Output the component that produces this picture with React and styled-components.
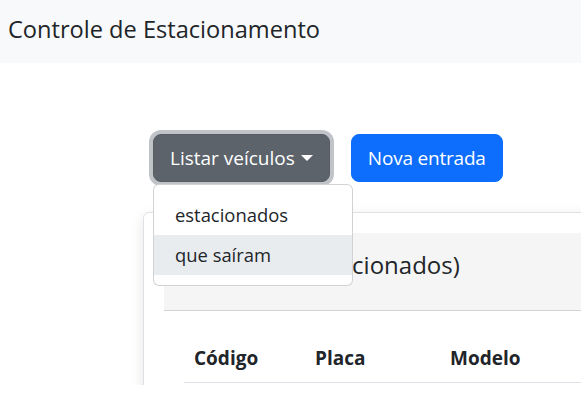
import styled, { createGlobalStyle } from "styled-components";

const GlobalStyle = createGlobalStyle`
  body {
    margin: 0;
    background: #fff;
    color: #212529;
    font-family: "Open Sans", "Noto Sans", sans-serif;
    overflow: hidden;
  }
`;

function App() {
  return (
    <>
      <GlobalStyle />
      <Navbar>
        <Brand>Controle de Estacionamento</Brand>
      </Navbar>
      <Main>
        <ButtonRow>
          <DropdownWrap>
            <Button variant="secondary" focused>
              Listar veículos
              <Caret />
            </Button>
            <Menu>
              <MenuItem>estacionados</MenuItem>
              <MenuItem active>que saíram</MenuItem>
            </Menu>
          </DropdownWrap>
          <Button variant="primary">Nova entrada</Button>
        </ButtonRow>
        <Card>
          <CardHeader>Veículos (estacionados)</CardHeader>
          <Table>
            <thead>
              <tr>
                <Th width={121}>Código</Th>
                <Th width={135}>Placa</Th>
                <Th>Modelo</Th>
              </tr>
            </thead>
          </Table>
        </Card>
      </Main>
    </>
  );
}

export default App;

const Navbar = styled.nav`
  display: flex;
  align-items: center;
  height: 63px;
  padding: 0 8px;
  background: #f8f9fa;
`;

const Brand = styled.div`
  font-size: 23.6px;
  line-height: 1.5;
  margin-top: -4px;
`;

const Main = styled.main`
  height: 322px;
  overflow: hidden;
  padding: 71px 0 0 143px;
  box-sizing: border-box;
`;

const ButtonRow = styled.div`
  display: flex;
  gap: 21px;
  margin-left: 10px;
`;

const DropdownWrap = styled.div`
  position: relative;
`;

const Button = styled.button`
  display: inline-flex;
  align-items: center;
  height: 48px;
  padding: 0 16px;
  border-radius: 8px;
  font-family: inherit;
  font-size: 19px;
  letter-spacing: ${(p) => (p.variant === "primary" ? "-0.2px" : "0")};
  color: #fff;
  cursor: pointer;
  background: ${(p) => (p.variant === "primary" ? "#0d6efd" : "#5c636a")};
  border: 1px solid
    ${(p) => (p.variant === "primary" ? "#0d6efd" : "#565e64")};
  box-shadow: ${(p) =>
    p.focused ? "0 0 0 4px rgba(130, 138, 145, 0.5)" : "none"};
`;

const Caret = styled.span`
  display: inline-block;
  margin-left: 6px;
  border-top: 6px solid #fff;
  border-left: 6px solid transparent;
  border-right: 6px solid transparent;
`;

const Menu = styled.div`
  position: absolute;
  top: calc(100% + 2px);
  left: 0;
  z-index: 10;
  width: 200px;
  box-sizing: border-box;
  padding: 10px 0;
  background: #fff;
  border: 1px solid rgba(0, 0, 0, 0.175);
  border-radius: 6px;
`;

const MenuItem = styled.div`
  height: 40px;
  line-height: 40px;
  padding: 0 20px 0 21px;
  font-size: 18.4px;
  color: #212529;
  background: ${(p) => (p.active ? "#e9ecef" : "transparent")};
`;

const Card = styled.section`
  width: 720px;
  margin-top: 30px;
  padding: 20px;
  background: #fff;
  border: 1px solid #dee2e6;
  border-radius: 6px;
  box-shadow: 0 4px 14px rgba(0, 0, 0, 0.1);
`;

const CardHeader = styled.div`
  height: 78px;
  display: flex;
  align-items: center;
  padding: 0 0 14px 36px;
  box-sizing: border-box;
  background: #f5f5f5;
  border-bottom: 1px solid #d3d3d3;
  font-size: 24px;
`;

const Table = styled.table`
  margin: 24px 0 0 20px;
  border-collapse: collapse;
  table-layout: fixed;
  width: calc(100% - 20px);
`;

const Th = styled.th`
  box-sizing: border-box;
  width: ${(p) => (p.width ? `${p.width}px` : "auto")};
  padding: 10px 10px;
  text-align: left;
  font-size: 19px;
  font-weight: 700;
  line-height: 27px;
  border-bottom: 1px solid #dee2e6;
`;
